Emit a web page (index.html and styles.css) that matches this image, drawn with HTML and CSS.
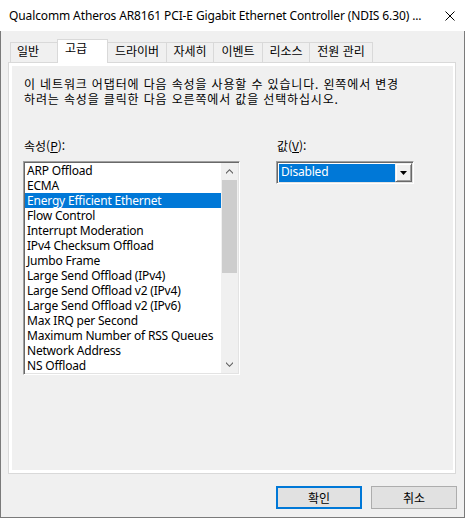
FILE: index.html
```html
<!DOCTYPE html>
<html lang="ko">
<head>
<meta charset="utf-8">
<title>Qualcomm Atheros AR8161 PCI-E Gigabit Ethernet Controller</title>
<link rel="stylesheet" href="styles.css">
</head>
<body>
<div class="window">
  <div class="titlebar">
    <span class="title">Qualcomm Atheros AR8161 PCI-E Gigabit Ethernet Controller (NDIS 6.30) ...</span>
    <svg class="close" width="10" height="10" viewBox="0 0 10 10"><path d="M0.5 0.5 L9.5 9.5 M9.5 0.5 L0.5 9.5" stroke="#000" stroke-width="1" fill="none"/></svg>
  </div>
  <div class="frame">
    <div class="tabs">
      <div class="tab t1">일반</div>
      <div class="tab active">고급</div>
      <div class="tab t3">드라이버</div>
      <div class="tab t4">자세히</div>
      <div class="tab t5">이벤트</div>
      <div class="tab t6">리소스</div>
      <div class="tab t7">전원 관리</div>
    </div>
    <div class="panel">
      <div class="page">
        <p class="desc">이 네트워크 어댑터에 다음 속성을 사용할 수 있습니다. 왼쪽에서 변경<br>하려는 속성을 클릭한 다음 오른쪽에서 값을 선택하십시오.</p>
        <div class="props">
          <div class="col-left">
            <div class="label">속성(<u>P</u>):</div>
            <div class="listbox">
              <ul class="items">
                <li>ARP Offload</li>
                <li>ECMA</li>
                <li class="sel">Energy Efficient Ethernet</li>
                <li>Flow Control</li>
                <li>Interrupt Moderation</li>
                <li>IPv4 Checksum Offload</li>
                <li>Jumbo Frame</li>
                <li>Large Send Offload (IPv4)</li>
                <li>Large Send Offload v2 (IPv4)</li>
                <li>Large Send Offload v2 (IPv6)</li>
                <li>Max IRQ per Second</li>
                <li>Maximum Number of RSS Queues</li>
                <li>Network Address</li>
                <li>NS Offload</li>
              </ul>
              <div class="scrollbar">
                <div class="sb-btn"><svg width="7" height="5" viewBox="0 0 7 5"><polygon points="3.5,0 7,3.5 7,5 3.5,1.5 0,5 0,3.5" fill="#606060"/></svg></div>
                <div class="sb-track"><div class="sb-thumb"></div></div>
                <div class="sb-btn"><svg width="7" height="5" viewBox="0 0 7 5"><polygon points="0,0 3.5,3.5 7,0 7,1.5 3.5,5 0,1.5" fill="#606060"/></svg></div>
              </div>
            </div>
          </div>
          <div class="col-right">
            <div class="label">값(<u>V</u>):</div>
            <div class="combo">
              <div class="combo-field">Disabled</div>
              <div class="combo-btn"><svg width="7" height="4" viewBox="0 0 7 4"><polygon points="0,0 7,0 3.5,4" fill="#000"/></svg></div>
            </div>
          </div>
        </div>
      </div>
    </div>
    <div class="buttons">
      <button class="btn default">확인</button>
      <button class="btn">취소</button>
    </div>
  </div>
</div>
</body>
</html>
```

FILE: styles.css
```css
html, body {
  margin: 0;
  padding: 0;
}

body {
  width: 465px;
  height: 518px;
  overflow: hidden;
  background: #f0f0f0;
  font-family: "Noto Sans", "Noto Sans CJK KR", sans-serif;
  font-size: 12px;
  color: #000;
}

.window {
  width: 465px;
  height: 518px;
  display: flex;
  flex-direction: column;
}

.titlebar {
  height: 31px;
  flex: none;
  background: #fff;
  display: flex;
  align-items: center;
  justify-content: space-between;
  padding: 0 10px 0 9px;
}

.title {
  line-height: 31px;
  white-space: nowrap;
  letter-spacing: -0.12px;
}

.close {
  display: block;
}

.frame {
  flex: 1;
  display: flex;
  flex-direction: column;
  border: 1px solid #7a7a7a;
  border-top: none;
  background: #f0f0f0;
}

.tabs {
  display: flex;
  align-items: flex-end;
  height: 23px;
  margin-top: 8px;
  padding-left: 9px;
}

.tab {
  box-sizing: border-box;
  height: 20px;
  border-top: 1px solid #d9d9d9;
  border-left: 1px solid #d9d9d9;
  background: #f0f0f0;
  font-family: "Noto Sans CJK KR", sans-serif;
  line-height: 15px;
  text-align: center;
  white-space: nowrap;
}

.t1 { width: 47px; text-align: left; padding-left: 6px; }
.t3 { width: 58px; border-left: none; }
.t4 { width: 47px; }
.t5 { width: 49px; }
.t6 { width: 47px; }
.t7 { width: 64px; border-right: 1px solid #d9d9d9; }

.tab.active {
  width: 51px;
  height: 24px;
  margin-bottom: -1px;
  background: #fff;
  border: 1px solid #d9d9d9;
  border-bottom: none;
  text-align: left;
  padding-left: 7px;
  position: relative;
  z-index: 1;
}

.panel {
  box-sizing: border-box;
  height: 412px;
  margin: 0 8px 0 7px;
  border: 1px solid #d9d9d9;
  background: #fff;
  padding: 3px 2px 3px 3px;
  display: flex;
}

.page {
  flex: 1;
  background: #f0f0f0;
  padding: 10px 0 0 11px;
}

.desc {
  margin: 0;
  padding-left: 1px;
  font-family: "Noto Sans CJK KR", sans-serif;
  line-height: 15px;
  letter-spacing: 0.85px;
  white-space: nowrap;
}

.props {
  display: flex;
  margin-top: 32px;
}

.label {
  height: 15px;
  line-height: 15px;
  padding-left: 1px;
  margin-bottom: 8px;
  font-family: "Noto Sans CJK KR", sans-serif;
  white-space: nowrap;
}

.listbox {
  box-sizing: border-box;
  width: 217px;
  height: 214px;
  border: 1px solid;
  border-color: #a0a0a0 #fff #fff #a0a0a0;
  box-shadow: inset 1px 1px #696969, inset -1px -1px #e3e3e3;
  background: #fff;
  padding: 1px;
  display: flex;
}

.items {
  list-style: none;
  margin: 0;
  padding: 0;
  flex: 1;
  overflow: hidden;
}

.items li {
  height: 15px;
  line-height: 15px;
  padding-left: 2px;
  white-space: nowrap;
  letter-spacing: -0.2px;
}

.items li.sel {
  background: #0078d7;
  color: #fff;
}

.scrollbar {
  width: 17px;
  background: #f0f0f0;
  display: flex;
  flex-direction: column;
}

.sb-btn {
  height: 17px;
  display: flex;
  align-items: center;
  justify-content: center;
}

.sb-btn svg {
  display: block;
}

.sb-track {
  flex: 1;
}

.sb-thumb {
  height: 93px;
  margin: 0 1px;
  background: #cdcdcd;
}

.col-right {
  margin-left: 36px;
}

.combo {
  box-sizing: border-box;
  width: 138px;
  height: 23px;
  border: 1px solid;
  border-color: #a0a0a0 #fff #fff #a0a0a0;
  box-shadow: inset 1px 1px #696969, inset -1px -1px #e3e3e3;
  background: #fff;
  padding: 1px;
  display: flex;
}

.combo-field {
  flex: 1;
  margin: 1px 0 0 1px;
  background: #0078d7;
  color: #fff;
  line-height: 16px;
  padding-left: 2px;
  letter-spacing: -0.2px;
}

.combo-btn {
  box-sizing: border-box;
  width: 17px;
  border: 1px solid;
  border-color: #f0f0f0 #696969 #696969 #f0f0f0;
  box-shadow: inset 1px 1px #fff, inset -1px -1px #a0a0a0;
  background: #f0f0f0;
  display: flex;
  align-items: center;
  justify-content: center;
}

.combo-btn svg {
  display: block;
}

.buttons {
  display: flex;
  justify-content: flex-end;
  gap: 9px;
  margin-top: 12px;
  padding-right: 7px;
}

.btn {
  box-sizing: border-box;
  width: 86px;
  height: 23px;
  padding: 0;
  margin: 0;
  background: #e1e1e1;
  border: 1px solid #adadad;
  font-family: "Noto Sans CJK KR", sans-serif;
  font-size: 12px;
  color: #000;
}

.btn.default {
  border: 2px solid #0078d7;
}
```
